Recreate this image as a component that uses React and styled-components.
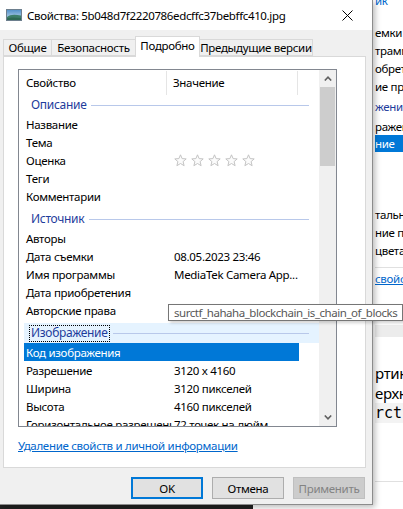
import React from "react";
import styled, { createGlobalStyle } from "styled-components";

const GlobalStyle = createGlobalStyle`
  html, body { margin: 0; padding: 0; background: #ffffff; }
  body { font-family: "Noto Sans", "Open Sans", sans-serif; font-size: 11.5px; color: #000; }
  * { box-sizing: border-box; }
`;

const FONT = `"Noto Sans", "Open Sans", sans-serif`;

const Screen = styled.div`
  position: relative;
  width: 403px;
  height: 509px;
  overflow: hidden;
  display: flex;
  flex-direction: column;
  font-family: ${FONT};
  font-size: 11.5px;
  letter-spacing: -0.3px;
`;

const Desktop = styled.div`
  display: flex;
  height: 505px;
  flex: none;
`;

const Dialog = styled.div`
  position: relative;
  z-index: 2;
  width: 373px;
  flex: none;
  display: flex;
  flex-direction: column;
  background: #f0f0f0;
  border-right: 1px solid #8c8c8c;
  border-bottom: 1px solid #8c8c8c;
  box-shadow: 2px 2px 6px rgba(0, 0, 0, 0.28);
`;

const TitleBar = styled.div`
  height: 30px;
  background: #ffffff;
  display: flex;
  align-items: center;
  padding-left: 6px;
  flex: none;
`;

const TitleText = styled.div`
  margin-left: 5px;
  flex: 1;
  white-space: nowrap;
  color: #000;
  font-size: 11.5px;
  letter-spacing: -0.35px;
`;

const CloseBtn = styled.div`
  width: 46px;
  height: 30px;
  display: flex;
  align-items: center;
  justify-content: center;
  margin-right: 2px;
`;

const Body = styled.div`
  flex: 1;
  display: flex;
  flex-direction: column;
  padding: 6px 6px 0 3px;
`;

const Tabs = styled.div`
  display: flex;
  align-items: flex-end;
  height: 21px;
  position: relative;
  z-index: 1;
  margin-bottom: -1px;
`;

const Tab = styled.div`
  width: ${(p) => p.$w}px;
  height: ${(p) => (p.$active ? 21 : 17)}px;
  margin-bottom: ${(p) => (p.$active ? 0 : 1)}px;
  margin-left: ${(p) => (p.$first ? 0 : -1)}px;
  background: ${(p) => (p.$active ? "#ffffff" : "#f0f0f0")};
  border: 1px solid #d9d9d9;
  border-bottom: ${(p) => (p.$active ? "none" : "1px solid #d9d9d9")};
  display: flex;
  align-items: center;
  justify-content: center;
  padding-bottom: ${(p) => (p.$active ? 3 : 0)}px;
  white-space: nowrap;
  position: relative;
  z-index: ${(p) => (p.$active ? 2 : 1)};
`;

const Panel = styled.div`
  width: 363px;
  height: 412px;
  background: #ffffff;
  border: 1px solid #d9d9d9;
  display: flex;
  flex-direction: column;
  padding: 12px 0 0 14px;
`;

const ListView = styled.div`
  width: 319px;
  height: 358px;
  border: 1px solid #828790;
  display: flex;
  overflow: hidden;
`;

const ListContent = styled.div`
  flex: 1;
  display: flex;
  flex-direction: column;
  overflow: hidden;
`;

const HeaderRow = styled.div`
  height: 25px;
  flex: none;
  display: flex;
  align-items: center;
`;

const HeaderCell = styled.div`
  width: ${(p) => p.$w}px;
  height: 24px;
  display: flex;
  align-items: center;
  padding-left: ${(p) => p.$pl}px;
  border-right: ${(p) => (p.$divider ? "1px solid #e5e5e5" : "none")};
  flex: none;
`;

const GroupRow = styled.div`
  height: 20px;
  flex: none;
  margin-top: ${(p) => p.$mt}px;
  margin-left: 5px;
  display: flex;
  align-items: center;
  padding-left: 6px;
  padding-right: 10px;
  background: ${(p) => (p.$hover ? "#e5f3ff" : "transparent")};
`;

const GroupLabel = styled.div`
  color: #1e3c9c;
  font-size: 12px;
  padding: 0 1px;
  height: 15px;
  line-height: 14px;
  outline: ${(p) => (p.$focus ? "1px dotted #000" : "none")};
  white-space: nowrap;
`;

const GroupLine = styled.div`
  flex: 1;
  height: 1px;
  margin-left: 4px;
  background: #b8c8ea;
`;

const ItemRow = styled.div`
  height: 18px;
  flex: none;
  width: 275px;
  margin-left: 5px;
  display: grid;
  grid-template-columns: 148px 127px;
  align-items: center;
  background: ${(p) => (p.$selected ? "#0078d7" : "transparent")};
  color: ${(p) => (p.$selected ? "#ffffff" : "#000000")};
`;

const Cell = styled.div`
  padding-left: 2px;
  padding-right: 4px;
  white-space: nowrap;
  overflow: hidden;
`;

const Stars = styled.div`
  display: flex;
  gap: 4px;
  padding-left: 2px;
`;

const Scrollbar = styled.div`
  width: 17px;
  flex: none;
  background: #f0f0f0;
  display: flex;
  flex-direction: column;
`;

const ScrollArrow = styled.div`
  height: 17px;
  flex: none;
  display: flex;
  align-items: center;
  justify-content: center;
`;

const ScrollThumb = styled.div`
  height: 79px;
  margin: 0 1px;
  background: #cdcdcd;
  flex: none;
`;

const ScrollTrack = styled.div`
  flex: 1;
`;

const LinkText = styled.a`
  margin-top: 11px;
  height: 16px;
  line-height: 16px;
  color: #0066cc;
  text-decoration: underline;
  white-space: nowrap;
  cursor: pointer;
`;

const ButtonRow = styled.div`
  display: flex;
  justify-content: flex-end;
  gap: 9px;
  margin-top: 9px;
  padding-right: 1px;
`;

const Button = styled.div`
  width: 72px;
  height: 22px;
  display: flex;
  align-items: center;
  justify-content: center;
  background: ${(p) => (p.$disabled ? "#cccccc" : "#e1e1e1")};
  color: ${(p) => (p.$disabled ? "#838383" : "#000")};
  border: ${(p) =>
    p.$primary ? "2px solid #0078d7" : p.$disabled ? "1px solid #bfbfbf" : "1px solid #adadad"};
`;

const Strip = styled.div`
  flex: 1;
  background: #ffffff;
  display: flex;
  flex-direction: column;
  overflow: hidden;
  padding-left: 2px;
`;

const StripLine = styled.div`
  height: ${(p) => p.$h}px;
  flex: none;
  display: flex;
  align-items: center;
  white-space: nowrap;
  color: ${(p) => p.$color || "#000"};
  background: ${(p) => p.$bg || "transparent"};
  font-family: ${(p) => (p.$mono ? `"DejaVu Sans Mono", "Liberation Mono", monospace` : "inherit")};
  font-size: ${(p) => (p.$big ? 15 : 11.5)}px;
  letter-spacing: ${(p) => (p.$mono ? 0 : -0.3)}px;
  text-decoration: ${(p) => (p.$link ? "underline" : "none")};
  border-bottom: ${(p) => (p.$rule ? "1px solid #e0e0e0" : "none")};
`;

const Taskbar = styled.div`
  height: 4px;
  width: 253px;
  background: #202020;
  flex: none;
`;

const Tooltip = styled.div`
  position: absolute;
  z-index: 5;
  left: 168px;
  top: 304px;
  width: 235px;
  height: 17px;
  background: #ffffff;
  border: 1px solid #767676;
  color: #575757;
  padding-left: 5px;
  line-height: 15px;
  letter-spacing: -0.45px;
  white-space: nowrap;
  box-shadow: 2px 2px 3px rgba(0, 0, 0, 0.18);
`;

const PictureIcon = () => (
  <svg width="16" height="12" viewBox="0 0 16 12">
    <defs>
      <linearGradient id="sky" x1="0" y1="0" x2="0" y2="1">
        <stop offset="0" stopColor="#4f8fc8" />
        <stop offset="1" stopColor="#cfe3f3" />
      </linearGradient>
    </defs>
    <rect x="0.5" y="0.5" width="15" height="11" fill="url(#sky)" stroke="#6d7f8e" />
    <path d="M1 8 C4 5.5 8 5 15 6.5 L15 11 L1 11 Z" fill="#3d7f6a" />
    <path d="M1 9.5 C5 8 10 8.5 15 9 L15 11 L1 11 Z" fill="#2f6a55" />
  </svg>
);

const CloseIcon = () => (
  <svg width="11" height="11" viewBox="0 0 11 11">
    <path d="M0.5 0.5 L10.5 10.5 M10.5 0.5 L0.5 10.5" stroke="#000" strokeWidth="1" />
  </svg>
);

const Star = () => (
  <svg width="13" height="13" viewBox="0 0 13 13">
    <path
      d="M6.5 0.8 L8.1 4.6 L12.2 4.9 L9.1 7.6 L10.1 11.7 L6.5 9.5 L2.9 11.7 L3.9 7.6 L0.8 4.9 L4.9 4.6 Z"
      fill="#fbfbfb"
      stroke="#c4c4c4"
      strokeWidth="1"
      strokeLinejoin="round"
    />
  </svg>
);

const Chevron = ({ up }) => (
  <svg width="8" height="5" viewBox="0 0 8 5">
    <path
      d={up ? "M0.8 4.5 L4 1.2 L7.2 4.5" : "M0.8 0.5 L4 3.8 L7.2 0.5"}
      fill="none"
      stroke="#606060"
      strokeWidth="1.6"
    />
  </svg>
);

const groups = [
  {
    title: "Описание",
    mt: 0,
    items: [
      ["Название", ""],
      ["Тема", ""],
      ["Оценка", "stars"],
      ["Теги", ""],
      ["Комментарии", ""],
    ],
  },
  {
    title: "Источник",
    mt: 4,
    items: [
      ["Авторы", ""],
      ["Дата съемки", "08.05.2023 23:46"],
      ["Имя программы", "MediaTek Camera App..."],
      ["Дата приобретения", ""],
      ["Авторские права", ""],
    ],
  },
  {
    title: "Изображение",
    mt: 4,
    hover: true,
    items: [
      ["Код изображения", "", true],
      ["Разрешение", "3120 x 4160"],
      ["Ширина", "3120 пикселей"],
      ["Высота", "4160 пикселей"],
      ["Горизонтальное разрешение", "72 точек на дюйм"],
    ],
  },
];

const stripLines = [
  { h: 10, text: "ик", color: "#0066cc", mt: -5 },
  { h: 18, text: "" },
  { h: 18, text: "емки" },
  { h: 18, text: "трамм" },
  { h: 18, text: "обрет" },
  { h: 18, text: "ие пра" },
  { h: 22, text: "жени", color: "#1e3c9c" },
  { h: 18, text: "ражен" },
  { h: 17, text: "ние", color: "#fff", bg: "#0078d7" },
  { h: 53, text: "" },
  { h: 18, text: "тально" },
  { h: 18, text: "ние по" },
  { h: 18, text: "цвета" },
  { h: 9, text: "", rule: true },
  { h: 20, text: "свойс", color: "#0066cc", link: true },
  { h: 37, text: "" },
  { h: 12, text: "", bg: "#ececec" },
  { h: 26, text: "" },
  { h: 20, text: "ртин", big: true },
  { h: 20, text: "ерхн", big: true },
  { h: 20, text: "rctf", mono: true, bg: "#f3f3f3", big: true },
  { h: 59, text: "", rule: true },
];

export default function App() {
  return (
    <>
      <GlobalStyle />
      <Screen>
        <Desktop>
          <Dialog>
            <TitleBar>
              <PictureIcon />
              <TitleText>Свойства: 5b048d7f2220786edcffc37bebffc410.jpg</TitleText>
              <CloseBtn>
                <CloseIcon />
              </CloseBtn>
            </TitleBar>
            <Body>
              <Tabs>
                <Tab $w={49} $first>Общие</Tab>
                <Tab $w={85}>Безопасность</Tab>
                <Tab $w={65} $active>Подробно</Tab>
                <Tab $w={114}>Предыдущие версии</Tab>
              </Tabs>
              <Panel>
                <ListView>
                  <ListContent>
                    <HeaderRow>
                      <HeaderCell $w={148} $pl={7} $divider>Свойство</HeaderCell>
                      <HeaderCell $w={131} $pl={6} $divider>Значение</HeaderCell>
                    </HeaderRow>
                    {groups.map((g) => (
                      <React.Fragment key={g.title}>
                        <GroupRow $mt={g.mt} $hover={g.hover}>
                          <GroupLabel $focus={g.hover}>{g.title}</GroupLabel>
                          <GroupLine />
                        </GroupRow>
                        {g.items.map(([k, v, sel]) => (
                          <ItemRow key={k} $selected={sel}>
                            <Cell>{k}</Cell>
                            {v === "stars" ? (
                              <Stars>
                                <Star />
                                <Star />
                                <Star />
                                <Star />
                                <Star />
                              </Stars>
                            ) : (
                              <Cell>{v}</Cell>
                            )}
                          </ItemRow>
                        ))}
                      </React.Fragment>
                    ))}
                  </ListContent>
                  <Scrollbar>
                    <ScrollArrow>
                      <Chevron up />
                    </ScrollArrow>
                    <ScrollThumb />
                    <ScrollTrack />
                    <ScrollArrow>
                      <Chevron />
                    </ScrollArrow>
                  </Scrollbar>
                </ListView>
                <LinkText>Удаление свойств и личной информации</LinkText>
              </Panel>
              <ButtonRow>
                <Button $primary>OK</Button>
                <Button>Отмена</Button>
                <Button $disabled>Применить</Button>
              </ButtonRow>
            </Body>
          </Dialog>
          <Strip>
            {stripLines.map((l, i) => (
              <StripLine
                key={i}
                $h={l.h}
                $color={l.color}
                $bg={l.bg}
                $mono={l.mono}
                $big={l.big}
                $link={l.link}
                $rule={l.rule}
                style={l.mt ? { marginTop: l.mt } : undefined}
              >
                {l.text}
              </StripLine>
            ))}
          </Strip>
        </Desktop>
        <Taskbar />
        <Tooltip>surctf_hahaha_blockchain_is_chain_of_blocks</Tooltip>
      </Screen>
    </>
  );
}
